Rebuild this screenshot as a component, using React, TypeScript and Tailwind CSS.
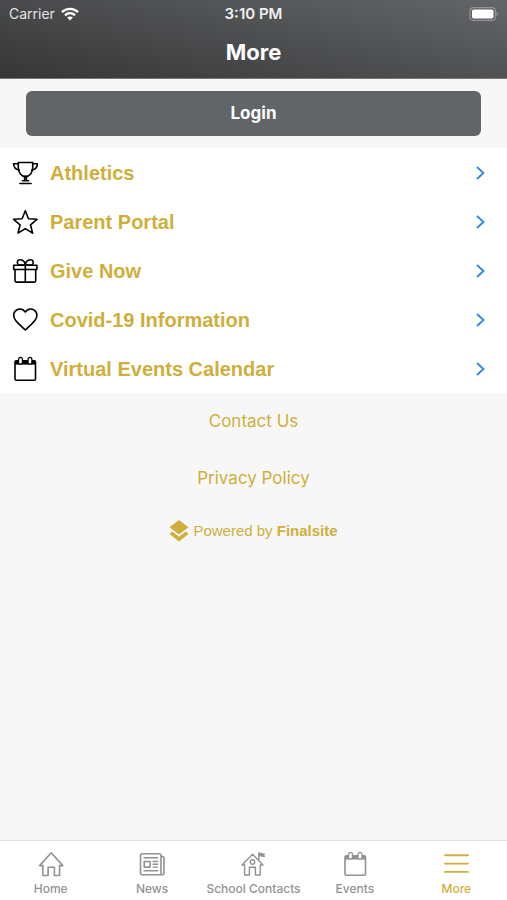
import type { ReactNode } from "react";

const strokeProps = {
  fill: "none",
  stroke: "currentColor",
  strokeWidth: 1.6,
  strokeLinecap: "round" as const,
  strokeLinejoin: "round" as const,
};

function Icon({ children }: { children: ReactNode }) {
  return (
    <svg viewBox="0 0 26 26" className="size-[26px] shrink-0" aria-hidden="true" {...strokeProps}>
      {children}
    </svg>
  );
}

function TrophyIcon() {
  return (
    <Icon>
      <path d="M6.300 2.500h14.400v5c0 5.200-3 8.900-7.200 8.900s-7.200-3.700-7.200-8.900z" />
      <path d="M6.300 3.800H1.500c.2 3.200 2.300 5.800 5.800 6.400M20.700 3.800h4.800c-.2 3.200-2.300 5.800-5.800 6.400" />
      <path d="M12.600 16.600v3.600M14.400 16.600v3.600M10.400 20.700h6.200M7.900 23.500h11.200" />
    </Icon>
  );
}

function StarIcon() {
  return (
    <Icon>
      <path d="M13.300 1.800l3.200 7.900 8.500.6-6.500 5.500 2.100 8.300-7.300-4.500L6 24.100l2.100-8.300-6.500-5.500 8.500-.6z" />
    </Icon>
  );
}

function GiftIcon() {
  return (
    <Icon>
      <path d="M1.700 7.300h23.200v4.200H1.700zM3 11.500h20.700v11.300c0 .9-.4 1.300-1.300 1.300H4.300c-.9 0-1.300-.4-1.300-1.300zM13.300 7.300v16.800" />
      <path d="M13.300 7.100H6.500C4.200 4.500 5.500 1.500 8.300 1.700c3 .2 4.700 2.400 5 5.400zM13.300 7.100h6.800c2.300-2.600 1-5.600-1.800-5.400-3 .2-4.700 2.400-5 5.400z" />
    </Icon>
  );
}

function HeartIcon() {
  return (
    <Icon>
      <path d="M13.300 5C10.600.9 4.800 1.100 2.600 5c-1.500 2.700-.8 6 1.100 8.500C6.100 16.700 9.500 19.300 13.300 23c3.800-3.700 7.200-6.300 9.600-9.500 1.900-2.500 2.600-5.800 1.100-8.500-2.200-3.900-8-4.100-10.700 0z" />
    </Icon>
  );
}

function CalendarIcon() {
  return (
    <Icon>
      <rect x="3" y="4.800" width="20.500" height="19.400" rx="1.300" />
      <path d="M3 4.800h20.500v3.800H3z" fill="currentColor" stroke="none" />
      <rect x="6.600" y="1.400" width="3.800" height="6.800" rx="1.900" fill="white" strokeWidth="1.200" />
      <rect x="16.100" y="1.400" width="3.800" height="6.800" rx="1.900" fill="white" strokeWidth="1.200" />
    </Icon>
  );
}

function HomeIcon() {
  return (
    <Icon>
      <path d="M13.200 1.800L1.700 14.600h3.200v9.900h5.200v-8.300h6.300v8.300h5.200v-9.900h3.200z" />
    </Icon>
  );
}

function NewsIcon() {
  return (
    <Icon>
      <path d="M22 5.500h1.500c1 0 1.500.5 1.500 1.500v14.500c0 1.500-.8 2.300-2.300 2.300H3.500c-1.300 0-2-.7-2-2V4.500c0-1.100.6-1.700 1.700-1.700h17.100c1.100 0 1.700.6 1.700 1.700v17.200c0 1.300.3 2.100 1 2.100" />
      <path d="M5 6.800h13.700M5 19.800h13.700M14 10.500h4.700M14 13.300h4.700M14 16.100h4.700" strokeWidth="1.400" />
      <rect x="5.200" y="10.500" width="5.900" height="5.600" />
    </Icon>
  );
}

function SchoolIcon() {
  return (
    <Icon>
      <path d="M12.500 3.300L2 14h2.600v10h4.800v-7.700h6V24h4.800V14H23zM18.800 9V2" strokeWidth="1.400" />
      <path d="M19 1.800h3.200l.8.700h2.300l-1 1.800 1 1.800h-2.700l-.8-.7H19z" fill="currentColor" stroke="none" />
      <circle cx="12.500" cy="11" r="2.200" strokeWidth="1.400" />
    </Icon>
  );
}

function MenuIcon() {
  return (
    <Icon>
      <path d="M2 4.300h23M2 12.600h23M2 20.900h23" strokeWidth="1.900" />
    </Icon>
  );
}

function StatusBar() {
  return (
    <div className="grid h-7 grid-cols-3 items-center px-[9px]">
      <div className="flex items-center gap-1.5 text-sm text-[#e4e4e5]">
        <span>Carrier</span>
        <svg viewBox="0 0 18 14" className="h-3.5 w-[18px]" fill="none" stroke="white" strokeWidth="2.400" aria-hidden="true">
          <path d="M1 5.200C5.500.8 12.500.8 17 5.200M4 8.300c2.900-2.800 7.100-2.800 10 0" />
          <path d="M9 13.600l-2.900-3c1.700-1.500 4.100-1.500 5.800 0z" fill="white" stroke="none" />
        </svg>
      </div>
      <span className="text-center text-[15px] font-semibold text-[#f0f0f0]">3:10 PM</span>
      <svg viewBox="0 0 30 14" className="h-3.5 w-[30px] justify-self-end" aria-hidden="true">
        <rect x="2" y=".7" width="25.500" height="12.600" rx="3.500" fill="none" stroke="#939496" strokeWidth="1.200" />
        <rect x="4" y="2.500" width="21.500" height="9" rx="1.800" fill="white" />
        <path d="M28.600 4.800c1.800.7 1.800 3.700 0 4.400z" fill="#939496" />
      </svg>
    </div>
  );
}

const links = [
  { label: "Athletics", icon: <TrophyIcon /> },
  { label: "Parent Portal", icon: <StarIcon /> },
  { label: "Give Now", icon: <GiftIcon /> },
  { label: "Covid-19 Information", icon: <HeartIcon /> },
  { label: "Virtual Events Calendar", icon: <CalendarIcon /> },
];

const tabs = [
  { label: "Home", icon: <HomeIcon /> },
  { label: "News", icon: <NewsIcon /> },
  { label: "School Contacts", icon: <SchoolIcon /> },
  { label: "Events", icon: <CalendarIcon /> },
  { label: "More", icon: <MenuIcon />, active: true },
];

export default function App() {
  return (
    <div className="flex min-h-screen flex-col bg-[#f7f7f7] font-[Inter,sans-serif]">
      <header className="h-[79px] border-b border-[#777879] bg-linear-[12deg,#363636,#636568]">
        <StatusBar />
        <h1 className="text-center text-[22px] leading-12 font-bold text-white">More</h1>
      </header>

      <main className="flex-1">
        <div className="px-[26px] py-3">
          <button type="button" className="h-[45px] w-full rounded-md bg-[#626568] text-[17px] font-bold text-white">
            Login
          </button>
        </div>

        <ul className="bg-white">
          {links.map((link) => (
            <li key={link.label}>
              <a href="#" className="flex h-[49px] items-center gap-3 pr-[21px] pl-3 text-black">
                {link.icon}
                <span className="flex-1 font-['Liberation_Sans',sans-serif] text-xl font-bold text-[#cfaf3c]">
                  {link.label}
                </span>
                <svg viewBox="0 0 12 16" className="h-4 w-3" fill="none" stroke="#2b86ea" strokeWidth="1.800" aria-hidden="true">
                  <path d="M3 2l6.500 6L3 14" />
                </svg>
              </a>
            </li>
          ))}
        </ul>

        <div className="flex flex-col items-center text-[17px] text-[#cfaf3c]">
          <a href="#" className="leading-[57px]">Contact Us</a>
          <a href="#" className="leading-[57px]">Privacy Policy</a>
          <a href="#" className="flex h-12 items-center gap-1 font-['Liberation_Sans',sans-serif] text-[15px]">
            <svg viewBox="0 0 20 24" className="h-6 w-5" fill="currentColor" aria-hidden="true">
              <path d="M10 1l9.500 7.300L10 15.500.5 8.300z" />
              <path d="M3.300 12.600L10 17.700l6.700-5.100 2.800 2.300L10 22.500.5 14.900z" />
            </svg>
            <span>
              Powered by <strong>Finalsite</strong>
            </span>
          </a>
        </div>
      </main>

      <nav className="grid h-[60px] grid-cols-5 border-t border-[#dedede] bg-white">
        {tabs.map((tab) => (
          <a
            key={tab.label}
            href="#"
            aria-current={tab.active ? "page" : undefined}
            className={`flex flex-col items-center gap-1 pt-2.5 text-xs leading-4 font-medium whitespace-nowrap ${
              tab.active ? "text-[#cfaf3c]" : "text-[#929292]"
            }`}
          >
            {tab.icon}
            <span>{tab.label}</span>
          </a>
        ))}
      </nav>
    </div>
  );
}
